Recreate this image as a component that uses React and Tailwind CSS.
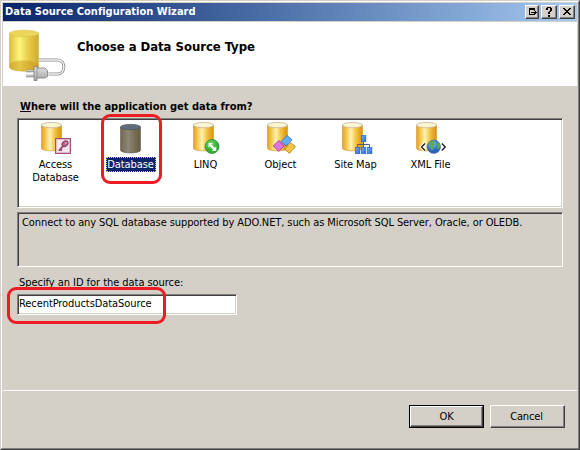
const bevelIn =
  "border border-t-[#808080] border-l-[#808080] border-r-white border-b-white shadow-[inset_1px_1px_0_#404040,inset_-1px_-1px_0_#d4d0c8]";
const bevelOut =
  "bg-[#d4d0c8] border border-t-white border-l-white border-r-[#404040] border-b-[#404040] shadow-[inset_-1px_-1px_0_#808080]";

function Cylinder({ x = 2, top = 0, dark = false }) {
  return (
    <g transform={`translate(${x} ${top})`}>
      <path
        d="M.5 3.2V26.200C.5 29.800 20.500 29.800 20.500 26.200V3.200z"
        fill={dark ? "url(#steel)" : "url(#gold)"}
        stroke={dark ? "#5c5a58" : "#d3952a"}
        strokeWidth=".6"
      />
      <ellipse
        cx="10.5"
        cy="3.1"
        rx="10"
        ry="2.7"
        fill={dark ? "#5f6d7d" : "#fbf6cf"}
        stroke={dark ? "#4e565e" : "#c3b3a0"}
        strokeWidth=".8"
      />
    </g>
  );
}

function Badge({ kind }) {
  switch (kind) {
    case "access":
      return (
        <g>
          <rect x="16.500" y="16.500" width="15" height="15" fill="#f6e3ec" stroke="#a3517a" />
          <rect x="17.500" y="17.500" width="13" height="13" fill="none" stroke="#dfb9cc" />
          <path d="M19.800 28.800l4.500-5M21.500 27.500l1.500 1" stroke="#8a3a60" strokeWidth="1.600" />
          <ellipse cx="26" cy="21.800" rx="3.300" ry="2.500" fill="#b0668a" stroke="#8a3a60" transform="rotate(-40 26 21.800)" />
          <circle cx="26.800" cy="21" r="1" fill="#d9a6bf" />
        </g>
      );
    case "linq":
      return (
        <g>
          <circle cx="23" cy="24.500" r="7" fill="url(#green)" stroke="#27952b" strokeWidth=".8" />
          <path d="M19.500 21h4.500l-1.500 1.500 3.300 3.300 1.500-1.500v4.700h-4.700l1.500-1.500-3.300-3.300-1.300 1.300z" fill="#f2fbf0" />
        </g>
      );
    case "object":
      return (
        <g strokeWidth=".8">
          <path d="M17 19.500L23 13.500l5 4.300-6 6z" fill="#64adf4" stroke="#286dbe" />
          <path d="M9.500 24l5.200-5.500 5.500 5.300-5.600 5.700z" fill="#df72e0" stroke="#a22ca8" />
          <path d="M20.500 27.200l6-6.500 5 3.800-6 6.800z" fill="#f2c545" stroke="#ae7915" />
        </g>
      );
    case "sitemap":
      return (
        <g>
          <path d="M24.500 20v6M18.500 26v-3.500h12V26" fill="none" stroke="#56606d" />
          <g fill="url(#blue)" stroke="#245fce" strokeWidth=".6">
            <rect x="22.300" y="13.300" width="4.600" height="6.400" />
            <rect x="16.300" y="25.300" width="4.600" height="6.400" />
            <rect x="22.300" y="25.300" width="4.600" height="6.400" />
            <rect x="28.300" y="25.300" width="4.600" height="6.400" />
          </g>
        </g>
      );
    case "xml":
      return (
        <g>
          <path d="M11 21.500l-3.500 3.500 3.500 3.500M27.800 21.500l3.500 3.500-3.500 3.500" fill="none" stroke="#fff" strokeWidth="3.200" />
          <circle cx="19.800" cy="24.700" r="6.700" fill="url(#globe)" stroke="#3c5fa6" strokeWidth=".6" />
          <path d="M15 21c1-2 4-3 5.500-2l-.8 2 1.300 1.200-2 1.800-.5 4.500c-1.500 0-2-2-2-3.500zM22 22.500l3-2.500c1.500 3 1.600 5-.8 7.700l-1.500-1.700 1-1.500z" fill="#55ae52" />
          <path d="M11 21.500l-3.500 3.500 3.500 3.500M27.800 21.500l3.500 3.500-3.500 3.500" fill="none" stroke="#111" strokeWidth="1.200" />
        </g>
      );
    default:
      return null;
  }
}

const sources = [
  { id: "access", lines: ["Access", "Database"], x: 2 },
  { id: "database", lines: ["Database"], x: 6, top: 2, selected: true },
  { id: "linq", lines: ["LINQ"], x: 4 },
  { id: "object", lines: ["Object"], x: 3 },
  { id: "sitemap", lines: ["Site Map"], x: 3 },
  { id: "xml", lines: ["XML File"], x: 2 },
];

function SourceItem({ item }) {
  return (
    <div className="relative flex w-[75px] shrink-0 flex-col items-center pt-px">
      <svg width="33" height="32" viewBox="0 0 33 32" className="-ml-px block overflow-visible">
        <Cylinder x={item.x} top={item.top} dark={item.selected} />
        <Badge kind={item.id} />
      </svg>
      <div className="mt-[4px] flex flex-col items-center text-center tracking-[-0.08px]">
        {item.lines.map((line) => (
          <span
            key={line}
            className={
              item.selected
                ? "-mt-px h-[15px] w-[50px] bg-[#0a246a] leading-[15px] whitespace-nowrap text-white outline-1 -outline-offset-1 outline-dotted outline-[#d8c87a]"
                : "h-[13px] leading-[14px] whitespace-nowrap"
            }
          >
            {line}
          </span>
        ))}
      </div>
      {item.selected && (
        <div className="absolute top-[-7px] left-[8px] h-[70px] w-[61px] rounded-[9px] border-[3px] border-[#ed1c24]" />
      )}
    </div>
  );
}

function HeaderIcon() {
  return (
    <svg width="58" height="54" viewBox="0 0 58 54" className="block">
      <path d="M1.500 4v34c0 5.500 29 5.500 29 0V4z" fill="url(#bigGold)" stroke="#d0b03c" strokeWidth=".6" />
      <path d="M1.500 36c0-6 29-6 29 0v2c0 5.500-29 5.500-29 0z" fill="#cc971b" opacity=".5" />
      <ellipse cx="16" cy="4.500" rx="14.500" ry="3.300" fill="#ecd65a" stroke="#d6bd4e" strokeWidth=".6" />
      <path d="M30.500 31h19c8.500 0 8.500 14 0 14h-9" fill="none" stroke="#8f8f8f" strokeWidth="3" />
      <path d="M30.500 31h19c8.500 0 8.500 14 0 14h-9" fill="none" stroke="#f2f2f2" strokeWidth="1.300" />
      <path d="M18 42h9M18 47h9" stroke="#808080" strokeWidth="2.400" />
      <path d="M18 41.800h8M18 46.800h8" stroke="#e9e9e9" strokeWidth="1" />
      <path d="M26 37.500h3v1.500h8l2.500 2.500v6L37 49h-8v2.500h-3z" fill="url(#plug)" stroke="#7d7d7d" strokeWidth=".8" />
      <path d="M29 39v10" stroke="#888" strokeWidth=".7" />
    </svg>
  );
}

function Gradients() {
  return (
    <svg width="0" height="0" className="absolute">
      <defs>
        <linearGradient id="gold">
          <stop offset="0" stopColor="#e6a02a" />
          <stop offset=".2" stopColor="#f3c850" />
          <stop offset=".42" stopColor="#fff3b4" />
          <stop offset=".68" stopColor="#f3c23d" />
          <stop offset="1" stopColor="#d9920f" />
        </linearGradient>
        <linearGradient id="steel">
          <stop offset="0" stopColor="#74684e" />
          <stop offset=".4" stopColor="#8b8878" />
          <stop offset=".7" stopColor="#796e54" />
          <stop offset="1" stopColor="#665d48" />
        </linearGradient>
        <linearGradient id="bigGold">
          <stop offset="0" stopColor="#dcbf3c" />
          <stop offset=".35" stopColor="#fdf57c" />
          <stop offset=".65" stopColor="#e8cc4a" />
          <stop offset="1" stopColor="#d0ac34" />
        </linearGradient>
        <linearGradient id="blue" x2="1" y2="1">
          <stop offset="0" stopColor="#7fb0ff" />
          <stop offset="1" stopColor="#2563dd" />
        </linearGradient>
        <linearGradient id="plug" x2="0" y2="1">
          <stop offset="0" stopColor="#e4e4e4" />
          <stop offset="1" stopColor="#a2a2a2" />
        </linearGradient>
        <radialGradient id="green" cx=".4" cy=".3">
          <stop offset="0" stopColor="#79d868" />
          <stop offset="1" stopColor="#35ab36" />
        </radialGradient>
        <radialGradient id="globe" cx=".4" cy=".3">
          <stop offset="0" stopColor="#8fc5f6" />
          <stop offset="1" stopColor="#2861bf" />
        </radialGradient>
      </defs>
    </svg>
  );
}

function CaptionButton({ label, className, children }) {
  return (
    <button aria-label={label} className={`h-[14px] ${bevelOut} ${className}`}>
      <svg width="10" height="10" viewBox="0 0 10 10" className="mx-auto block" shapeRendering="crispEdges">
        {children}
      </svg>
    </button>
  );
}

export default function App() {
  return (
    <div className="h-[450px] w-[580px] overflow-hidden border border-t-[#d4d0c8] border-l-[#d4d0c8] border-r-[#404040] border-b-[#404040] bg-[#d4d0c8] font-['DejaVu_Sans_Condensed','DejaVu_Sans',sans-serif] text-[11px] [font-stretch:condensed] text-black">
      <Gradients />
      <div className="flex h-[448px] w-[578px] flex-col border border-t-white border-l-white border-r-[#808080] border-b-[#808080]">
        <header className="mx-px mt-px flex h-[18px] shrink-0 items-center bg-linear-to-r from-[#0a246a] to-[#a6caf0] pr-[2px] pl-[2px]">
          <h1 className="flex-1 text-[11px] leading-[18px] font-bold tracking-[0.01px] whitespace-nowrap text-white">
            Data Source Configuration Wizard
          </h1>
          <CaptionButton label="Undock" className="mr-[2px] w-[14px]">
            <path d="M2 1h6v2H2zM2 1h1v7H2zM2 7h6v1H2zM7 6h1v2H7zM4 5h6v1H4zM7 3h1v1H7zM8 4h1v3H8z" />
          </CaptionButton>
          <CaptionButton label="Help" className="mr-[2px] w-[16px]">
            <path d="M3 0h4v1H3zM2 1h2v2H2zM6 1h2v3H6zM5 4h2v1H5zM4 5h2v2H4zM4 8h2v2H4z" />
          </CaptionButton>
          <CaptionButton label="Close" className="w-[16px]">
            <path d="M1 1h2v1H1zM7 1h2v1H7zM2 2h2v1H2zM6 2h2v1H6zM3 3h4v1H3zM4 4h2v1H4zM3 5h4v1H3zM2 6h2v1H2zM6 6h2v1H6zM1 7h2v1H1zM7 7h2v1H7z" />
          </CaptionButton>
        </header>
        <section className="mx-px mt-px flex h-[64px] shrink-0 items-start bg-white pt-[7px] pl-[5px]">
          <HeaderIcon />
          <h2 className="mt-[9px] ml-[11px] text-[13px] leading-[18px] font-bold tracking-[-0.04px] whitespace-nowrap">
            Choose a Data Source Type
          </h2>
        </section>
        <main className="flex flex-col pt-[14px] pr-[15px] pl-[15px]">
          <h3 className="ml-[3px] h-[18px] text-[11px] leading-[14px] font-bold whitespace-nowrap">
            <span className="underline">W</span>here will the application get data from?
          </h3>
          <div className={`flex h-[90px] bg-white pt-[2px] ${bevelIn}`}>
            {sources.map((item) => (
              <SourceItem key={item.id} item={item} />
            ))}
          </div>
          <div className={`mt-[4px] h-[55px] pt-[3px] pl-[4px] leading-[14px] tracking-[-0.09px] whitespace-nowrap ${bevelIn}`}>
            Connect to any SQL database supported by ADO.NET, such as Microsoft SQL Server, Oracle, or OLEDB.
          </div>
          <label className="mt-[9px] ml-[2px] h-[18px] leading-[14px] tracking-[-0.05px] whitespace-nowrap">
            Specify an ID for the data source:
          </label>
          <div className={`relative h-[21px] w-[220px] bg-white pl-[1px] leading-[18px] tracking-[-0.08px] ${bevelIn}`}>
            RecentProductsDataSource
            <div className="absolute top-[-8px] left-[-11px] h-[37px] w-[159px] rounded-[9px] border-[3px] border-[#ed1c24]" />
          </div>
        </main>
        <footer className="mx-px mt-[75px] flex justify-end gap-[6px] border-t border-white pt-[14px] pr-[12px] tracking-[-0.15px]">
          <button className="h-[23px] w-[75px] border border-black">
            <span className={`block h-[21px] leading-[20px] ${bevelOut}`}>OK</span>
          </button>
          <button className={`h-[23px] w-[75px] pr-[2px] leading-[22px] ${bevelOut}`}>Cancel</button>
        </footer>
      </div>
    </div>
  );
}
